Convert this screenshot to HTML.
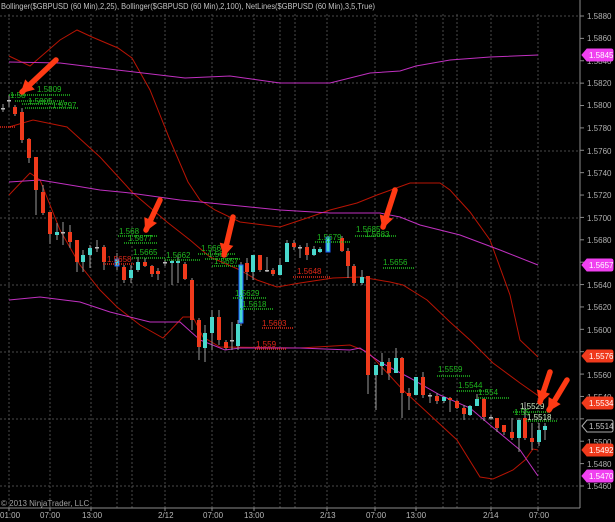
<!DOCTYPE html>
<html><head><meta charset="utf-8"><style>
html,body{margin:0;padding:0;background:#000;width:615px;height:522px;overflow:hidden}
svg{display:block}
text{font-family:"Liberation Sans",sans-serif}
</style></head><body>
<svg id="s" width="615" height="522" viewBox="0 0 615 522" xmlns="http://www.w3.org/2000/svg">
<rect width="615" height="522" fill="#000"/>
<g id="grid" stroke="#4a4a4a" stroke-width="1" stroke-dasharray="2,2"></g>
<g id="bands" fill="none" stroke-width="1"></g>
<g id="candles"></g>
<g id="lvls" stroke-dasharray="1,1" stroke-width="1.5"></g>
<g font-size="8" fill="#1fb81f">
<text x="10" y="98">1.58</text><text x="37" y="92">1.5809</text><text x="28" y="104">1.5805</text><text x="52" y="108">1.5797</text>
<text x="119" y="234">1.568</text><text x="128" y="241">1.5677</text><text x="133" y="255">1.5665</text><text x="166" y="258">1.5662</text>
<text x="201" y="251">1.5667</text><text x="208" y="257">1.566</text><text x="214" y="264">1.5657</text>
<text x="235" y="296">1.5629</text><text x="242" y="307">1.5618</text>
<text x="317" y="240">1.5679</text><text x="356" y="232">1.5685</text><text x="365" y="237">1.5683</text>
<text x="383" y="265">1.5656</text><text x="438" y="372">1.5559</text><text x="458" y="388">1.5544</text><text x="478" y="395">1.554</text>
<text x="514" y="415">1.55</text>
</g>
<g font-size="8" fill="#c8e8c0"><text x="520" y="409">1.5529</text><text x="527" y="420">1.5518</text></g>
<g font-size="8" fill="#e02818">
<text x="107" y="262">1.5658</text><text x="297" y="274">1.5648</text><text x="262" y="326">1.5603</text><text x="256" y="347">1.559</text>
</g>
<g id="arrows" fill="#ff3a14" stroke="#ff3a14"></g>
<line x1="580" y1="0" x2="580" y2="508" stroke="#8a8a8a"/>
<line x1="0" y1="508" x2="580" y2="508" stroke="#8a8a8a"/>
<g id="ticks" stroke="#8a8a8a"></g>
<g font-size="8" fill="#b0b0b0">
<text x="587" y="19">1.5880</text><text x="587" y="41">1.5860</text><text x="587" y="64">1.5840</text><text x="587" y="86">1.5820</text>
<text x="587" y="108">1.5800</text><text x="587" y="131">1.5780</text><text x="587" y="154">1.5760</text><text x="587" y="176">1.5740</text>
<text x="587" y="198">1.5720</text><text x="587" y="221">1.5700</text><text x="587" y="243">1.5680</text><text x="587" y="288">1.5640</text>
<text x="587" y="310">1.5620</text><text x="587" y="333">1.5600</text><text x="587" y="378">1.5560</text><text x="587" y="400">1.5540</text>
<text x="587" y="445">1.5500</text><text x="587" y="467">1.5480</text><text x="587" y="489">1.5460</text>
</g>
<g id="tags"></g>
<g font-size="8" fill="#fff">
<text x="589" y="58">1.5845</text><text x="589" y="268">1.5657</text><text x="589" y="359">1.5576</text><text x="589" y="406">1.5534</text>
<text x="589" y="453">1.5492</text><text x="589" y="479">1.5470</text>
</g>
<text x="589" y="429" font-size="8" fill="#c8c8c8">1.5514</text>
<g font-size="8" fill="#b8b8b8">
<text x="0" y="518">01:00</text><text x="40" y="518">07:00</text><text x="82" y="518">13:00</text><text x="158" y="518">2/12</text>
<text x="203" y="518">07:00</text><text x="244" y="518">13:00</text><text x="320" y="518">2/13</text><text x="366" y="518">07:00</text>
<text x="406" y="518">13:00</text><text x="483" y="518">2/14</text><text x="529" y="518">07:00</text>
</g>
<text x="1" y="506" font-size="8" fill="#a0a0a0">© 2013 NinjaTrader, LLC</text>
<text x="1" y="9" font-size="8" fill="#c0c0c0" textLength="374" lengthAdjust="spacingAndGlyphs">Bollinger($GBPUSD (60 Min),2,25), Bollinger($GBPUSD (60 Min),2,100), NetLines($GBPUSD (60 Min),3,5,True)</text>
</svg>
<script>
var NS="http://www.w3.org/2000/svg";
function el(p,n,a){var e=document.createElementNS(NS,n);for(var k in a)e.setAttribute(k,a[k]);document.getElementById(p).appendChild(e);return e;}
[9,50,91,117,132,165,212,254,280,295,327,375,416,443,457,491,538].forEach(function(x){el("grid","line",{x1:x,y1:14,x2:x,y2:508});});
[16,83,151,218,285,352,419,486].forEach(function(y){el("grid","line",{x1:0,y1:y,x2:580,y2:y});});
for(var y=16;y<=490;y+=22.38)el("ticks","line",{x1:580,y1:y,x2:584,y2:y});
[9,50,91,165,212,254,327,375,416,491,538].forEach(function(x){el("ticks","line",{x1:x,y1:508,x2:x,y2:511});});
function pl(pts,c){el("bands","polyline",{points:pts.map(function(p){return p.join(",")}).join(" "),stroke:c});}
var RB="#b81404";
pl([[9,56],[30,66],[60,40],[77,30],[92,37],[118,48],[132,58],[150,90],[170,140],[188,182],[200,200],[215,210],[240,222],[280,227],[307,218],[330,210],[357,203],[377,195],[410,183],[440,183],[450,190],[470,212],[490,240],[510,295],[520,340],[538,357]],RB);
pl([[9,127],[33,120],[67,127],[100,157],[133,193],[167,222],[190,240],[210,257],[240,270],[257,280],[277,287],[300,283],[333,278],[360,277],[390,282],[403,285],[427,300],[450,322],[470,340],[493,363],[520,383],[540,397]],RB);
pl([[9,195],[30,173],[40,180],[60,230],[80,265],[100,290],[117,307],[140,325],[163,338],[183,317],[193,317],[203,337],[220,347],[300,348],[350,345],[368,352],[403,390],[430,415],[457,440],[480,477],[493,479],[513,470],[525,460],[533,449],[538,450]],RB);
pl([[9,62],[60,63],[117,70],[185,78],[230,76],[280,83],[330,83],[370,73],[400,71],[416,66],[450,60],[490,57],[538,55]],"#c030c0");
pl([[9,182],[40,180],[100,190],[130,193],[180,200],[230,205],[280,210],[330,213],[380,213],[400,217],[420,225],[460,235],[500,250],[538,265]],"#c030c0");
pl([[9,300],[40,297],[80,302],[110,312],[150,322],[180,322],[200,340],[225,350],[240,348],[300,348],[350,350],[360,348],[380,362],[410,378],[440,395],[470,408],[490,425],[520,450],[538,476]],"#c030c0");
var C=[[3,108,109,104,112,"d"],[9,100,101,95,107,"d"],[15,107,114,105,116,"r"],[22,112,140,108,143,"r"],[29,139,158,138,163,"r"],[36,157,190,157,215,"r"],[43,192,213,185,215,"r"],[50,212,234,212,244,"r"],[57,232,235,223,240,"c"],[63,232,233,222,245,"d"],[70,232,242,225,248,"r"],[77,240,262,240,272,"r"],[83,255,262,250,272,"c"],[90,248,255,245,268,"c"],[97,247,248,240,252,"d"],[104,247,262,245,270,"r"],[117,259,266,253,270,"b"],[124,267,280,265,283,"r"],[131,270,278,265,283,"c"],[138,262,270,257,272,"c"],[145,262,266,258,267,"r"],[152,266,274,265,277,"r"],[158,271,274,268,280,"r"],[165,262,263,260,266,"d"],[172,261,263,260,285,"c"],[178,261,263,255,283,"c"],[185,264,279,262,280,"r"],[192,280,320,278,330,"r"],[199,320,347,318,360,"r"],[205,333,348,325,362,"c"],[212,317,333,310,350,"c"],[219,317,340,310,345,"r"],[226,342,348,340,350,"r"],[232,340,341,322,350,"d"],[238,324,346,320,350,"c"],[241,265,323,262,326,"b"],[247,263,272,258,280,"r"],[253,255,272,255,280,"c"],[260,255,270,255,272,"r"],[267,270,271,257,272,"d"],[273,270,274,268,276,"r"],[280,265,275,258,275,"c"],[287,243,262,240,262,"c"],[294,243,247,240,250,"r"],[300,247,248,245,258,"d"],[307,247,255,243,260,"r"],[314,249,255,246,256,"c"],[320,249,252,247,253,"c"],[328,237,252,236,252,"b"],[342,238,251,236,252,"r"],[348,251,266,248,278,"r"],[354,266,283,264,286,"r"],[362,277,283,270,285,"c"],[368,276,375,276,394,"r"],[376,365,375,365,410,"c"],[382,362,366,353,375,"c"],[389,362,373,358,380,"r"],[396,358,373,348,373,"c"],[402,358,393,357,418,"r"],[409,393,396,388,410,"r"],[416,377,395,377,395,"c"],[423,377,395,372,398,"r"],[430,395,396,393,403,"d"],[437,396,401,393,404,"r"],[444,397,401,397,403,"c"],[450,398,400,397,412,"r"],[457,401,408,400,409,"r"],[464,408,414,405,420,"r"],[470,406,415,405,416,"c"],[477,399,406,394,406,"c"],[484,399,417,398,421,"r"],[491,417,418,415,420,"d"],[497,418,428,418,432,"r"],[504,425,432,425,435,"r"],[512,432,438,418,440,"r"],[519,420,438,418,452,"c"],[525,418,438,402,440,"r"],[532,438,442,423,450,"r"],[539,430,442,423,446,"c"],[545,426,430,423,440,"c"]];
C.forEach(function(c){var x=c[0];el("candles","line",{x1:x,y1:c[3],x2:x,y2:c[4],stroke:"#9a9a9a"});
var col=c[5]=="r"?"#f03a1c":c[5]=="d"?"#bbbbbb":"#48d8cc";var h=Math.max(1.5,c[2]-c[1]);
var r=el("candles","rect",{x:x-2,y:c[1],width:4,height:h,fill:col});if(c[5]=="b"){r.setAttribute("stroke","#1c5cff");r.setAttribute("stroke-width","1");}});
function lv(x1,x2,y,c){el("lvls","line",{x1:x1,y1:y,x2:x2,y2:y,stroke:c});}
var G="#1fb81f",R="#e02818";
lv(9,70,95,G);lv(15,65,101,G);lv(22,70,104,G);lv(25,78,108,G);lv(118,158,236,G);lv(124,158,243,G);lv(132,165,258,G);lv(165,200,260,G);
lv(198,235,254,G);lv(205,240,259,G);lv(212,240,266,G);lv(233,266,298,G);lv(240,273,309,G);lv(315,350,242,G);lv(355,397,236,G);lv(383,415,268,G);
lv(437,470,376,G);lv(457,488,391,G);lv(478,510,398,G);lv(513,550,412,G);lv(526,558,421,G);
lv(103,135,264,R);lv(293,330,277,R);lv(262,293,328,R);lv(255,287,349,R);lv(0,15,127,R);
function ar(x1,y1,x2,y2){el("arrows","line",{x1:x1,y1:y1,x2:x2,y2:y2,"stroke-width":5.5,"stroke-linecap":"round"});
var dx=x2-x1,dy=y2-y1,L=Math.hypot(dx,dy),ux=dx/L,uy=dy/L,px=-uy,py=ux,hl=11,hw=7;
var bx=x2-ux*hl,by=y2-uy*hl;el("arrows","polygon",{points:[x2+ux*2,y2+uy*2,bx+px*hw,by+py*hw,bx-px*hw,by-py*hw].join(","),"stroke-width":0});}
ar(56,60,22,92);ar(160,200,146,230);ar(233,217,224,255);ar(395,190,383,227);ar(550,372,540,402);ar(567,380,549,410);
function tag(y,c,bd){el("tags","path",{d:"M582 "+y+" L587 "+(y-6)+" H611 Q613 "+(y-6)+" 613 "+(y-4)+" V"+(y+4)+" Q613 "+(y+6)+" 611 "+(y+6)+" H587 Z",fill:c,stroke:bd||c});}
tag(55,"#f040f0");tag(265,"#f040f0");tag(356,"#f03a1c");tag(403,"#f03a1c");tag(426,"#000","#aaa");tag(450,"#f03a1c");tag(476,"#f040f0");
</script>
</body></html>
